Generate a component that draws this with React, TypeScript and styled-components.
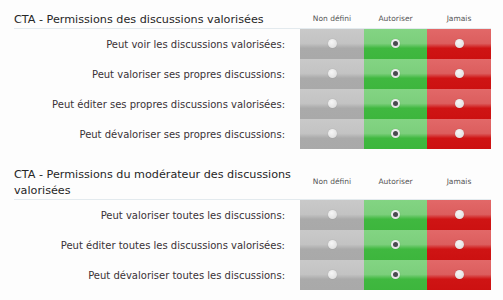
import React from "react";
import styled, { createGlobalStyle } from "styled-components";

type Choice = "unset" | "allow" | "never";

type Section = {
  title: string;
  rows: { label: string; value: Choice }[];
};

const sections: Section[] = [
  {
    title: "CTA - Permissions des discussions valorisées",
    rows: [
      { label: "Peut voir les discussions valorisées:", value: "allow" },
      { label: "Peut valoriser ses propres discussions:", value: "allow" },
      { label: "Peut éditer ses propres discussions valorisées:", value: "allow" },
      { label: "Peut dévaloriser ses propres discussions:", value: "allow" },
    ],
  },
  {
    title: "CTA - Permissions du modérateur des discussions valorisées",
    rows: [
      { label: "Peut valoriser toutes les discussions:", value: "allow" },
      { label: "Peut éditer toutes les discussions valorisées:", value: "allow" },
      { label: "Peut dévaloriser toutes les discussions:", value: "allow" },
    ],
  },
];

const columns: { key: Choice; label: string }[] = [
  { key: "unset", label: "Non défini" },
  { key: "allow", label: "Autoriser" },
  { key: "never", label: "Jamais" },
];

// glossy look: light top half, darker bottom half
const gradients: Record<Choice, string> = {
  unset: "linear-gradient(to bottom, #c9c9c9 0%, #c3c3c3 48%, #aaaaaa 64%, #a9a9a9 100%)",
  allow: "linear-gradient(to bottom, #83d483 0%, #7ccf7c 48%, #40b840 64%, #3db63d 100%)",
  never: "linear-gradient(to bottom, #e26868 0%, #dc5e5e 48%, #cf1414 64%, #cc1111 100%)",
};

const GlobalStyle = createGlobalStyle`
  html, body {
    margin: 0;
    padding: 0;
    background: #fdfdfd;
  }
  body {
    font-family: "DejaVu Sans", "Liberation Sans", sans-serif;
    color: #333;
  }
`;

const Page = styled.div`
  width: 503px;
  box-sizing: border-box;
  padding: 9px 12px 0 14px;
`;

const PermissionTable = styled.div<{ $first: boolean }>`
  display: grid;
  grid-template-columns: 286px 64px 63px 64px;
  grid-template-rows: auto;
  grid-auto-rows: 30px;
  margin-top: ${(p) => (p.$first ? "0" : "15px")};
`;

const SectionTitle = styled.h3`
  margin: 0;
  padding: 3px 0 0;
  font-size: 11.2px;
  font-weight: normal;
  line-height: 16px;
  color: #262626;
  border-bottom: 1px solid #e3eaee;
`;

const ColumnHeading = styled.div`
  display: flex;
  align-items: center;
  justify-content: center;
  font-size: 7.5px;
  color: #555;
  border-bottom: 1px solid #e3eaee;
`;

const RowLabel = styled.div`
  display: flex;
  align-items: center;
  justify-content: flex-end;
  padding-right: 15px;
  font-size: 10px;
  color: #3a3236;
  white-space: nowrap;
`;

const ChoiceCell = styled.label<{ $kind: Choice }>`
  display: flex;
  align-items: center;
  justify-content: center;
  padding-bottom: 1px;
  background: ${(p) => gradients[p.$kind]};
`;

const RadioDot = styled.span<{ $checked: boolean }>`
  position: relative;
  width: 9px;
  height: 9px;
  border-radius: 50%;
  background: radial-gradient(circle at 40% 35%, #f6f6f6 0%, #e2e2e2 70%, #d0d0d0 100%);
  box-shadow: 0 0 1px rgba(0, 0, 0, 0.25);
  &::after {
    content: "";
    display: ${(p) => (p.$checked ? "block" : "none")};
    position: absolute;
    left: 2px;
    top: 2px;
    width: 5px;
    height: 5px;
    border-radius: 50%;
    background: #4a4a4f;
  }
`;

export default function App() {
  return (
    <>
      <GlobalStyle />
      <Page>
        {sections.map((section, i) => (
          <PermissionTable key={section.title} $first={i === 0}>
            <SectionTitle>{section.title}</SectionTitle>
            {columns.map((col) => (
              <ColumnHeading key={col.key}>{col.label}</ColumnHeading>
            ))}
            {section.rows.map((row) => (
              <React.Fragment key={row.label}>
                <RowLabel>{row.label}</RowLabel>
                {columns.map((col) => (
                  <ChoiceCell key={col.key} $kind={col.key}>
                    <RadioDot $checked={row.value === col.key} />
                  </ChoiceCell>
                ))}
              </React.Fragment>
            ))}
          </PermissionTable>
        ))}
      </Page>
    </>
  );
}
